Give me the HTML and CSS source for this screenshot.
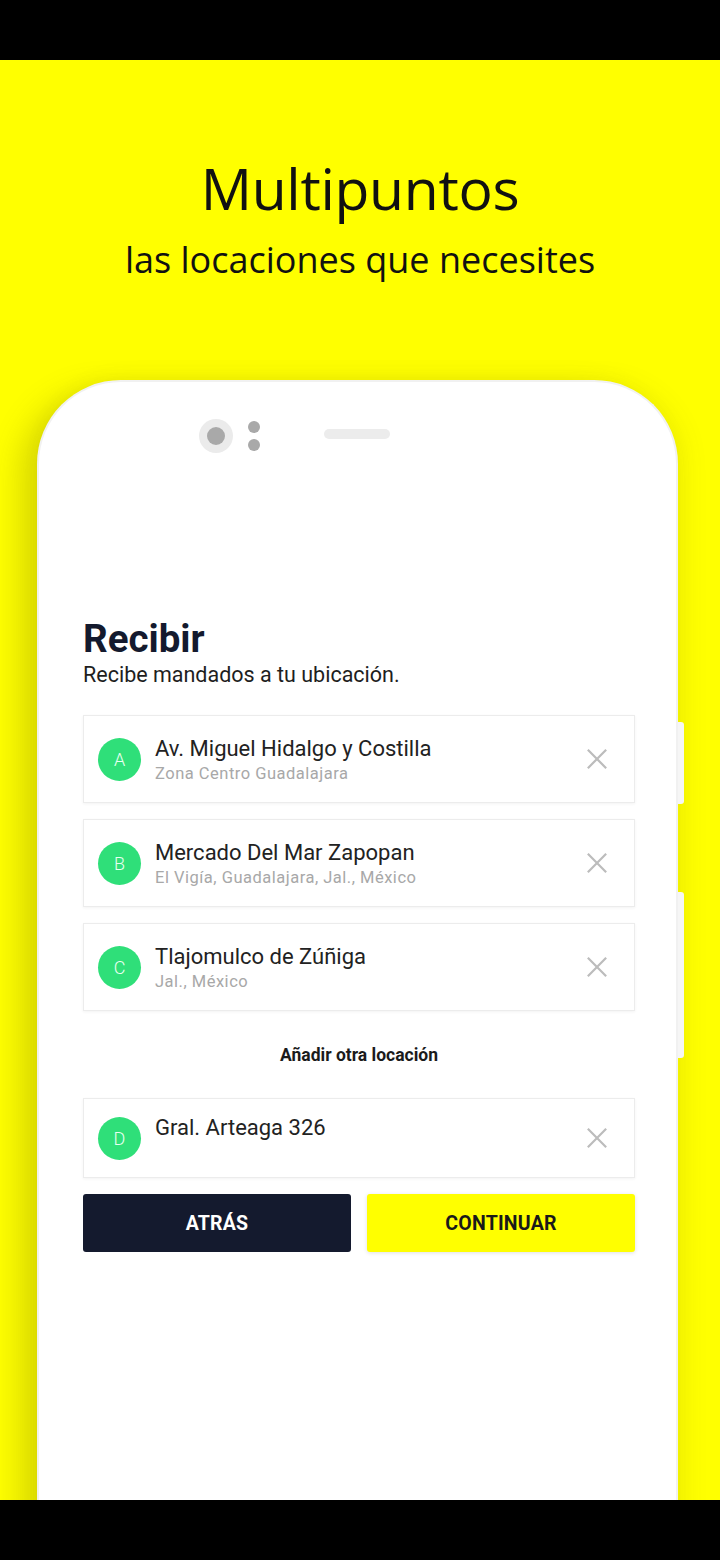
FILE: index.html
```html
<!DOCTYPE html>
<html lang="es">
<head>
<meta charset="utf-8">
<title>Multipuntos</title>
<link rel="stylesheet" href="styles.css">
</head>
<body>
<div class="bar"></div>
<main class="stage">
  <header class="hero">
    <h1 class="hero-title">Multipuntos</h1>
    <p class="hero-sub">las locaciones que necesites</p>
  </header>
  <section class="phone">
    <div class="tab tab-1"></div>
    <div class="tab tab-2"></div>
    <div class="sensors">
      <span class="cam"><span class="cam-lens"></span></span>
      <span class="dots"><i></i><i></i></span>
      <span class="speaker"></span>
    </div>
    <div class="app">
      <h2 class="app-title">Recibir</h2>
      <p class="app-sub">Recibe mandados a tu ubicación.</p>
      <ul class="list">
        <li class="card">
          <span class="pin">A</span>
          <div class="info"><div class="name">Av. Miguel Hidalgo y Costilla</div><div class="addr">Zona Centro Guadalajara</div></div>
          <svg class="close" viewBox="0 0 24 24"><path d="M2 2 L22 22 M22 2 L2 22"/></svg>
        </li>
        <li class="card">
          <span class="pin">B</span>
          <div class="info"><div class="name">Mercado Del Mar Zapopan</div><div class="addr">El Vigía, Guadalajara, Jal., México</div></div>
          <svg class="close" viewBox="0 0 24 24"><path d="M2 2 L22 22 M22 2 L2 22"/></svg>
        </li>
        <li class="card">
          <span class="pin">C</span>
          <div class="info"><div class="name">Tlajomulco de Zúñiga</div><div class="addr">Jal., México</div></div>
          <svg class="close" viewBox="0 0 24 24"><path d="M2 2 L22 22 M22 2 L2 22"/></svg>
        </li>
      </ul>
      <p class="add">Añadir otra locación</p>
      <div class="card card-d">
        <span class="pin">D</span>
        <div class="info"><div class="name">Gral. Arteaga 326</div><div class="addr">&nbsp;</div></div>
        <svg class="close" viewBox="0 0 24 24"><path d="M2 2 L22 22 M22 2 L2 22"/></svg>
      </div>
      <div class="actions">
        <button class="btn btn-back">ATRÁS</button>
        <button class="btn btn-next">CONTINUAR</button>
      </div>
    </div>
  </section>
</main>
<div class="bar"></div>
</body>
</html>
```
FILE: styles.css
```css
* { box-sizing: border-box; }
html, body { margin: 0; padding: 0; background: #000; }
body { width: 720px; height: 1560px; overflow: hidden; }
.bar { height: 60px; background: #000; }
.stage {
  height: 1440px;
  background: #ffff00;
  overflow: hidden;
  display: flex;
  flex-direction: column;
}
.hero { text-align: center; color: #111; font-family: "Open Sans", sans-serif; padding-top: 90px; }
.hero-title { margin: 0; font-size: 57px; font-weight: 400; line-height: 76px; letter-spacing: -0.3px; }
.hero-sub { margin: 10px 0 0; font-size: 36px; line-height: 48px; font-weight: 400; }
.phone {
  position: relative;
  margin: 96px 0 0 37px;
  width: 641px;
  height: 1200px;
  background: #fff;
  border-radius: 84px 84px 0 0;
  border: 2px solid #f1f1f1;
  border-bottom: none;
  box-shadow: -18px 10px 30px rgba(90, 90, 0, 0.22), 8px 0 24px rgba(90, 90, 0, 0.08);
  flex-shrink: 0;
}
.tab { position: absolute; right: -8px; width: 6px; background: #f6f6f6; border-radius: 0 3px 3px 0; }
.tab-1 { top: 340px; height: 82px; }
.tab-2 { top: 510px; height: 166px; }
.sensors { display: flex; align-items: center; padding: 36px 0 0 160px; height: 72px; }
.cam { width: 34px; height: 34px; border-radius: 50%; background: #ebebeb; display: flex; align-items: center; justify-content: center; }
.cam-lens { width: 18px; height: 18px; border-radius: 50%; background: #a9a9a9; }
.dots { display: flex; flex-direction: column; gap: 6px; margin-left: 15px; }
.dots i { width: 12px; height: 12px; border-radius: 50%; background: #a9a9a9; display: block; }
.speaker { width: 66px; height: 10px; border-radius: 5px; background: #ececec; margin-left: 64px; margin-top: -4px; }
.app { padding: 163px 41px 0 44px; font-family: Roboto, "Noto Sans", sans-serif; }
.app-title { margin: 0; font-size: 38.5px; line-height: 44px; font-weight: 700; color: #141a2e; }
.app-sub { margin: 0; font-size: 21.5px; line-height: 28px; color: #1e1e1e; }
.list { list-style: none; margin: 26px 0 0; padding: 0; display: flex; flex-direction: column; gap: 16px; }
.card {
  display: flex;
  align-items: center;
  height: 88px;
  padding: 0 26px 0 14px;
  background: #fff;
  border: 1px solid #ececec;
  box-shadow: 0 1px 3px rgba(0, 0, 0, 0.05);
}
.card-d { height: 80px; }
.pin {
  width: 43px; height: 43px; border-radius: 50%;
  background: #2fdf79; color: #e9fff1;
  display: flex; align-items: center; justify-content: center;
  font-size: 18px; font-weight: 300; flex-shrink: 0;
}
.info { flex: 1; margin-left: 14px; }
.name { font-size: 22px; line-height: 27px; color: #222; }
.addr { font-size: 16.5px; line-height: 20px; color: #a8a8a8; margin-top: 2px; letter-spacing: 0.5px; }
.close { width: 22px; height: 22px; fill: none; stroke: #bcbcbc; stroke-width: 2.4; }
.add { margin: 0; height: 87px; display: flex; align-items: center; justify-content: center; font-size: 17.5px; font-weight: 700; color: #1b1b1b; }
.actions { display: flex; gap: 16px; margin-top: 16px; }
.btn { flex: 1; height: 58px; border: none; border-radius: 3px; font-family: Roboto, sans-serif; font-size: 19.5px; font-weight: 700; letter-spacing: 0.2px; }
.btn-back { background: #141a2e; color: #fff; }
.btn-next { background: #ffff00; color: #1a1a1a; box-shadow: 0 1px 4px rgba(0, 0, 0, 0.12); }
```
